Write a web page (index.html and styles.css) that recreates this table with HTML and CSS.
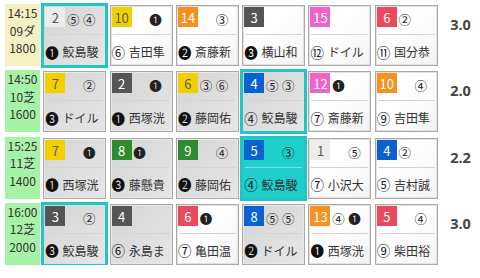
FILE: index.html
```html
<!DOCTYPE html>
<html lang="ja">
<head>
<meta charset="utf-8">
<link rel="stylesheet" href="styles.css">
</head>
<body>
<div class="board">
  <div class="row">
    <div class="info yellow"><div>14:15</div><div>09ダ</div><div>1800</div></div>
    <div class="card gray sel"><div class="top"><span class="num f1">2</span><span class="m">⑤</span><span class="m">④</span></div><div class="sep"></div><div class="bot"><span class="p">❶</span> 鮫島駿</div></div>
    <div class="card"><div class="top"><span class="num f5">10</span><span class="m"></span><span class="m">❶</span></div><div class="sep"></div><div class="bot"><span class="p">⑥</span> 吉田隼</div></div>
    <div class="card"><div class="top"><span class="num f7">14</span><span class="m"></span><span class="m">③</span></div><div class="sep"></div><div class="bot"><span class="p">❷</span> 斎藤新</div></div>
    <div class="card"><div class="top"><span class="num f2">3</span></div><div class="sep"></div><div class="bot"><span class="p">❸</span> 横山和</div></div>
    <div class="card"><div class="top"><span class="num f8">15</span></div><div class="sep"></div><div class="bot"><span class="p">⑫</span> ドイル</div></div>
    <div class="card"><div class="top"><span class="num f3">6</span><span class="m">②</span></div><div class="sep"></div><div class="bot"><span class="p">⑪</span> 国分恭</div></div>
    <div class="rate">3.0</div>
  </div>
  <div class="row">
    <div class="info green"><div>14:50</div><div>10芝</div><div>1600</div></div>
    <div class="card gray"><div class="top"><span class="num f5">7</span><span class="m"></span><span class="m">②</span></div><div class="sep"></div><div class="bot"><span class="p">❸</span> ドイル</div></div>
    <div class="card gray"><div class="top"><span class="num f2">2</span><span class="m"></span><span class="m">❶</span></div><div class="sep"></div><div class="bot"><span class="p">❶</span> 西塚洸</div></div>
    <div class="card gray"><div class="top"><span class="num f5">6</span><span class="m">③</span><span class="m">⑥</span></div><div class="sep"></div><div class="bot"><span class="p">❷</span> 藤岡佑</div></div>
    <div class="card gray sel"><div class="top"><span class="num f4">4</span><span class="m">⑤</span><span class="m">③</span></div><div class="sep"></div><div class="bot"><span class="p">④</span> 鮫島駿</div></div>
    <div class="card"><div class="top"><span class="num f8">12</span><span class="m">❶</span></div><div class="sep"></div><div class="bot"><span class="p">⑦</span> 斎藤新</div></div>
    <div class="card"><div class="top"><span class="num f7">10</span><span class="m"></span><span class="m">④</span></div><div class="sep"></div><div class="bot"><span class="p">⑨</span> 吉田隼</div></div>
    <div class="rate">2.0</div>
  </div>
  <div class="row">
    <div class="info green"><div>15:25</div><div>11芝</div><div>1400</div></div>
    <div class="card gray"><div class="top"><span class="num f5">7</span><span class="m"></span><span class="m">❶</span></div><div class="sep"></div><div class="bot"><span class="p">❶</span> 西塚洸</div></div>
    <div class="card gray"><div class="top"><span class="num f6">8</span><span class="m">❶</span></div><div class="sep"></div><div class="bot"><span class="p">❸</span> 藤懸貴</div></div>
    <div class="card gray"><div class="top"><span class="num f6">9</span><span class="m"></span><span class="m">④</span></div><div class="sep"></div><div class="bot"><span class="p">❷</span> 藤岡佑</div></div>
    <div class="card cyan sel"><div class="top"><span class="num f4">5</span><span class="m"></span><span class="m">③</span></div><div class="sep"></div><div class="bot"><span class="p">④</span> 鮫島駿</div></div>
    <div class="card"><div class="top"><span class="num f1">1</span><span class="m"></span><span class="m">⑤</span></div><div class="sep"></div><div class="bot"><span class="p">⑦</span> 小沢大</div></div>
    <div class="card"><div class="top"><span class="num f4">4</span><span class="m">②</span></div><div class="sep"></div><div class="bot"><span class="p">⑤</span> 吉村誠</div></div>
    <div class="rate">2.2</div>
  </div>
  <div class="row">
    <div class="info green"><div>16:00</div><div>12芝</div><div>2000</div></div>
    <div class="card gray sel"><div class="top"><span class="num f2">3</span><span class="m"></span><span class="m">②</span></div><div class="sep"></div><div class="bot"><span class="p">❸</span> 鮫島駿</div></div>
    <div class="card gray"><div class="top"><span class="num f2">4</span></div><div class="sep"></div><div class="bot"><span class="p">⑥</span> 永島ま</div></div>
    <div class="card"><div class="top"><span class="num f3">6</span><span class="m">❶</span></div><div class="sep"></div><div class="bot"><span class="p">⑦</span> 亀田温</div></div>
    <div class="card gray"><div class="top"><span class="num f4">8</span><span class="m">⑤</span><span class="m">⑤</span></div><div class="sep"></div><div class="bot"><span class="p">❷</span> ドイル</div></div>
    <div class="card"><div class="top"><span class="num f7">13</span><span class="m">④</span><span class="m">❶</span></div><div class="sep"></div><div class="bot"><span class="p">❶</span> 西塚洸</div></div>
    <div class="card"><div class="top"><span class="num f3">5</span><span class="m"></span><span class="m">④</span></div><div class="sep"></div><div class="bot"><span class="p">⑨</span> 柴田裕</div></div>
    <div class="rate">3.0</div>
  </div>
</div>
</body>
</html>
```
FILE: styles.css
```css
* { box-sizing: border-box; }
body {
  margin: 0;
  background: #fff;
  color: #333;
  font-family: "Noto Sans CJK JP", "Noto Sans", sans-serif;
}
.board {
  display: flex;
  flex-direction: column;
  gap: 5.3px;
  padding: 5px 0 0 5px;
}
.row {
  display: grid;
  grid-template-columns: 35px repeat(6, 63px) 1fr;
  column-gap: 3.3px;
  height: 61px;
}
.info {
  font-size: 12px;
  line-height: 17.5px;
  text-align: center;
  color: #333;
  margin-top: -1px;
}
.yellow { background: #f6efc4; }
.green { background: #a6f2a6; }
.card {
  border: 1px solid #a9a9a9;
  box-shadow: inset 0 0 0 1px #e2e2e2;
  background: linear-gradient(135deg, #ffffff 40%, #f3f3f3);
  display: flex;
  flex-direction: column;
}
.card.gray { background: linear-gradient(135deg, #d4d4d4, #e6e6e6); box-shadow: inset 0 0 0 1px #e8e8e8; }
.card.cyan { background: #1fcfcb; }
.card.sel {
  border-color: #22c4c4;
  box-shadow: 0 0 0 2px #22c4c4;
}
.top {
  height: 28px;
  padding: 1px 1px 0;
  display: flex;
  align-items: flex-start;
}
.num {
  width: 20px;
  height: 20px;
  font-size: 13px;
  line-height: 21px;
  text-align: center;
  color: #fff;
}
.f1 { background: #ececec; color: #555; }
.f2 { background: #555555; }
.f3 { background: #eb4a5c; }
.f4 { background: #0a62d2; }
.f5 { background: #f2d000; color: #5a5a5a; }
.f6 { background: #2e8b2e; }
.f7 { background: #f7901e; }
.f8 { background: #f563c9; }
.m {
  width: 16px;
  text-align: center;
  font-size: 12.5px;
  line-height: 20px;
  margin-top: 3px;
  color: #222;
}
.sep {
  height: 1px;
  margin: 0 2px;
  background: #d4d4d4;
}
.card.cyan .sep { background: #7adedb; }
.bot {
  flex: 1;
  display: flex;
  align-items: center;
  padding: 3px 0 0 1px;
  font-size: 12px;
  color: #333;
  white-space: pre;
}
.p { font-size: 13.5px; color: #111; margin-right: 1px; }
.rate {
  text-align: center;
  font-size: 14.5px;
  font-weight: bold;
  line-height: 18px;
  padding-top: 11px;
  color: #444;
  font-family: "Open Sans", "Noto Sans", sans-serif;
}
```
